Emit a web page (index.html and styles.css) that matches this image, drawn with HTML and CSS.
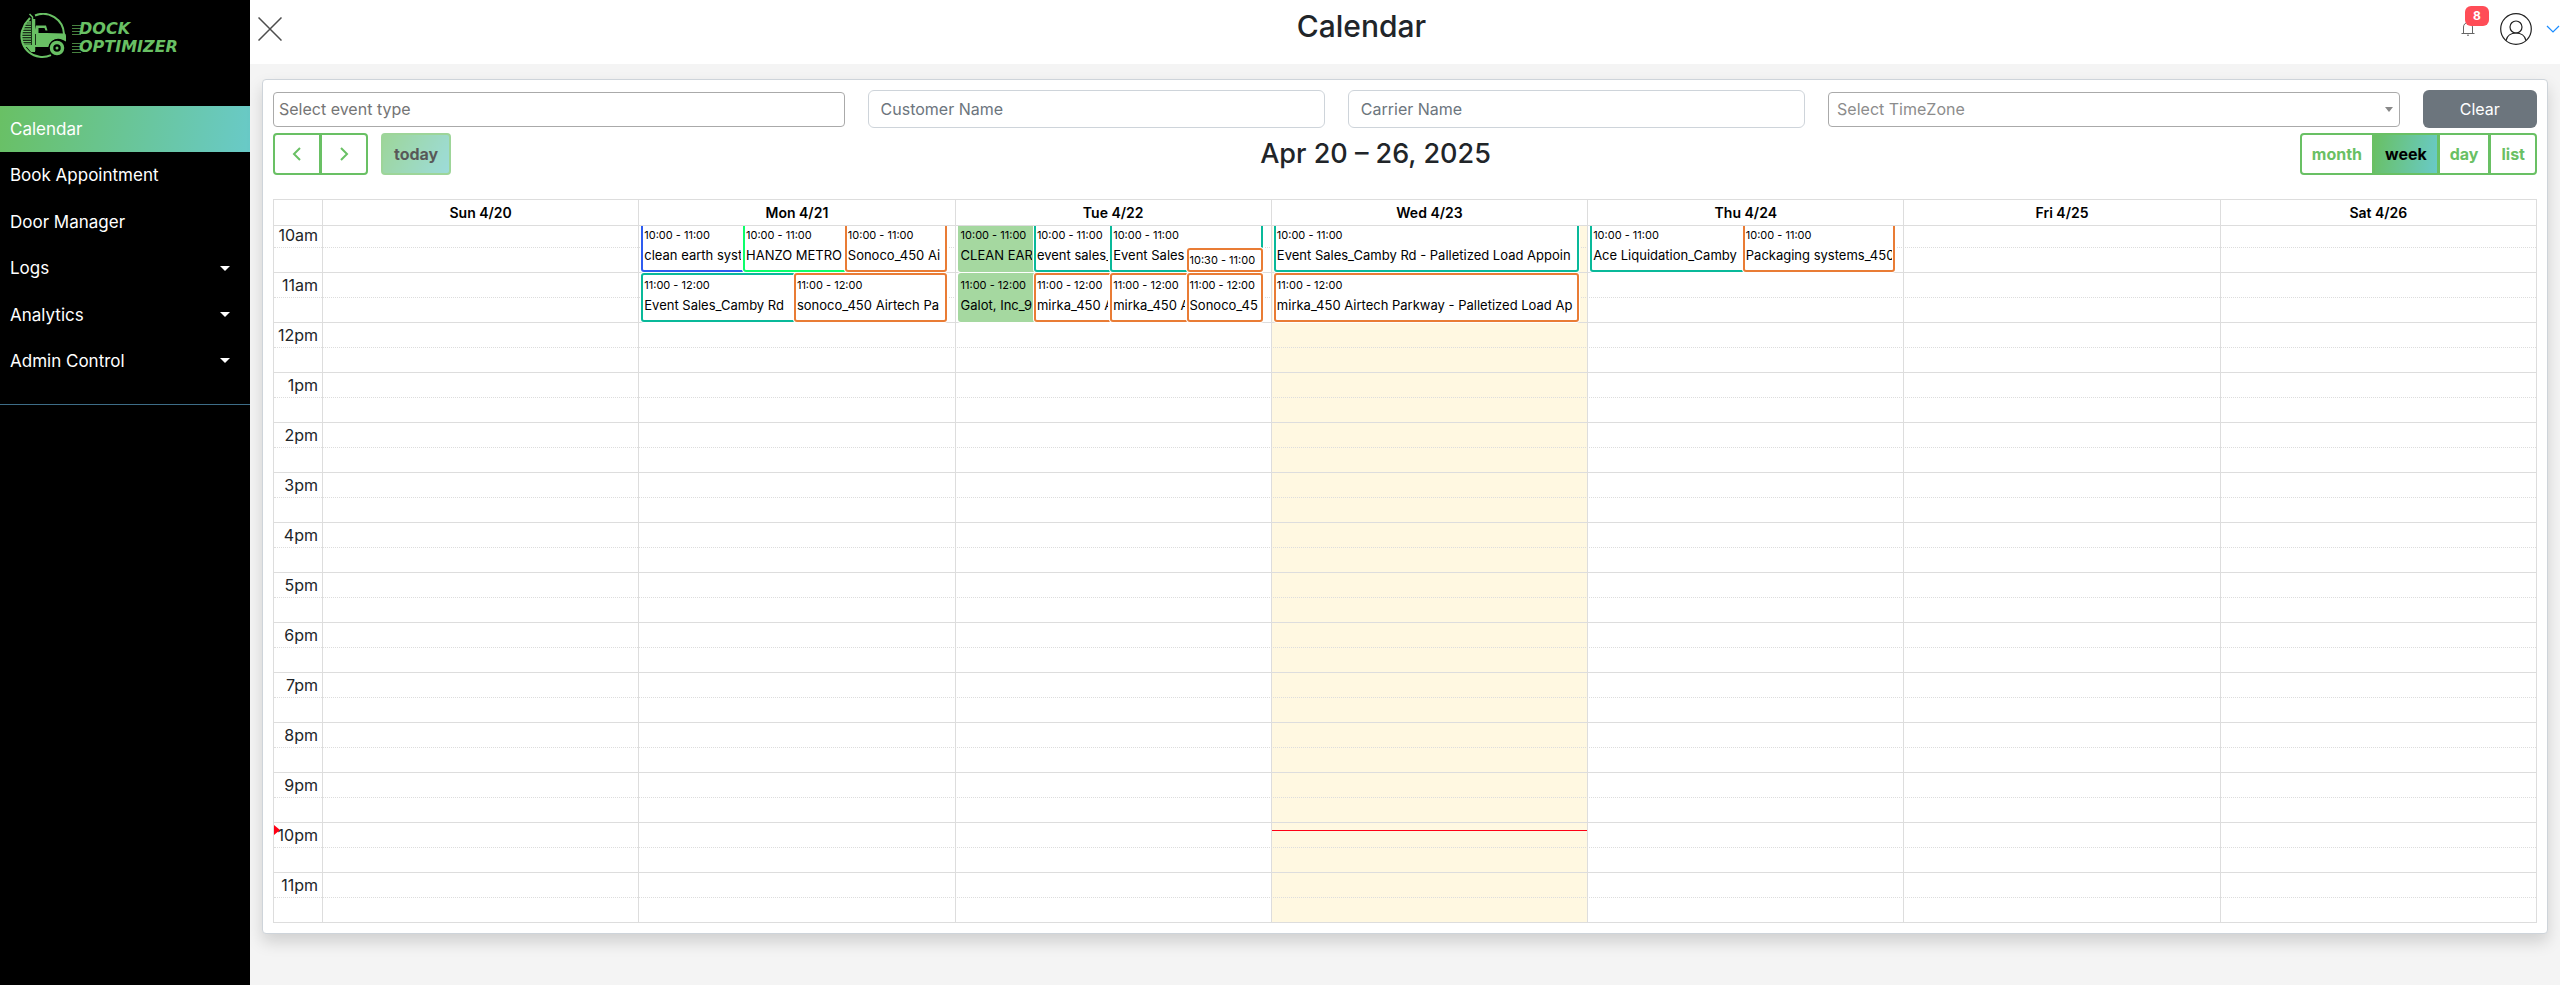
FILE: index.html
```html
<!DOCTYPE html>
<html lang="en">
<head>
<meta charset="utf-8">
<title>Dock Optimizer - Calendar</title>
<link rel="stylesheet" href="styles.css">
</head>
<body>
<div class="app">
  <aside class="sidebar">
    <a class="brand" href="#" aria-label="Dock Optimizer">
      <svg class="brand-mark" viewBox="0 0 46 46" aria-hidden="true">
        <g fill="none" stroke="#69c064">
          <path stroke-width="2" d="M15 2.500A21 21 0 0 1 44 21M31 42.200A21 21 0 0 1 2 18L5 11 10 5"/>
          <path stroke-width="1.300" d="M8 9h3M6 11h5M4 13.500h7M3 16h8M2 18.500h9M2 21h9M2 23.500h9M2 26h9M2 28.500h9M3 31h8"/>
          <path stroke-width="1.500" d="M9.500 1l3 3v35"/>
          <path stroke-width="2.500" d="M14 6v32"/>
          <path stroke-width="1.200" d="M17.500 22.500h7M17.500 24.500h7M17.500 26.500h7M17.500 28.500h7M17.500 30.500h7"/>
        </g>
        <path fill="#69c064" d="M16 12.500h10l1.500 5h-2l-1-2.500h-6v5h8l18 .5q1.500 0 1.500 3v5l-3-1.500q-6-3-11 1-3 2.500-3.500 6H3v-2h13v-11h-2z"/>
        <path fill="#69c064" d="M5 32h10v7h-4z"/>
        <circle cx="37" cy="35" r="8.500" fill="#000"/>
        <circle cx="37" cy="35" r="5.500" fill="none" stroke="#69c064" stroke-width="3.500"/>
        <circle cx="37" cy="35" r="1.500" fill="#69c064"/>
      </svg>
      <span class="brand-name"><span>DOCK</span><span>OPTIMIZER</span></span>
    </a>
    <nav class="menu">
      <a class="menu-item active" href="#">Calendar</a>
      <a class="menu-item" href="#">Book Appointment</a>
      <a class="menu-item" href="#">Door Manager</a>
      <a class="menu-item has-sub" href="#">Logs</a>
      <a class="menu-item has-sub" href="#">Analytics</a>
      <a class="menu-item has-sub" href="#">Admin Control</a>
    </nav>
    <hr class="menu-rule">
  </aside>

  <div class="main">
    <header class="topbar">
      <button class="icon-btn" type="button" aria-label="Close menu">
        <svg width="24" height="24" viewBox="0 0 24 24" fill="none" stroke="#4d4d4d" stroke-width="1.500"><path d="M0.500 0.500l23 23M23.500 0.500l-23 23"/></svg>
      </button>
      <h1 class="page-title">Calendar</h1>
      <div class="account">
        <button class="icon-btn bell" type="button" aria-label="Notifications">
          <svg width="14" height="14" viewBox="0 0 14 14" fill="none" stroke="#666"><path d="M2.500 11.500V5a4.500 4.500 0 0 1 9 0v6.500M0.500 11.500h13M6 13.200h2"/></svg>
          <span class="badge">8</span>
        </button>
        <button class="icon-btn" type="button" aria-label="Account">
          <svg width="32" height="32" viewBox="0 0 32 32" fill="none" stroke="#222" stroke-width="1.200"><circle cx="16" cy="16" r="15.300"/><circle cx="16" cy="14" r="6"/><path d="M6 27.500c1-4.500 5-7.500 10-7.500s9 3 10 7.500"/></svg>
        </button>
        <button class="icon-btn more" type="button" aria-label="More">
          <svg width="14" height="8" viewBox="0 0 14 8" fill="none" stroke="#1a8cff" stroke-width="1.200"><path d="M1 1l6 6 6-6"/></svg>
        </button>
      </div>
    </header>

    <main class="card">
      <form class="filters">
        <input class="field plain" type="text" placeholder="Select event type" aria-label="Event type">
        <input class="field" type="text" placeholder="Customer Name" aria-label="Customer Name">
        <input class="field" type="text" placeholder="Carrier Name" aria-label="Carrier Name">
        <div class="select">
          <select class="field zone" aria-label="Time zone"><option>Select TimeZone</option></select>
        </div>
        <button class="clear" type="button">Clear</button>
      </form>

      <div class="toolbar">
        <div class="toolbar-start">
          <div class="btn-group">
            <button class="btn arrow" type="button" aria-label="Previous week"><svg width="10" height="16" viewBox="0 0 10 16" fill="none" stroke="#69c064" stroke-width="2"><path d="M8 2L2 8l6 6"/></svg></button>
            <button class="btn arrow" type="button" aria-label="Next week"><svg width="10" height="16" viewBox="0 0 10 16" fill="none" stroke="#69c064" stroke-width="2"><path d="M2 2l6 6-6 6"/></svg></button>
          </div>
          <button class="btn today" type="button" disabled>today</button>
        </div>
        <h2 class="range">Apr 20 – 26, 2025</h2>
        <div class="btn-group">
          <button class="btn" type="button">month</button>
          <button class="btn on" type="button">week</button>
          <button class="btn" type="button">day</button>
          <button class="btn" type="button">list</button>
        </div>
      </div>

      <section class="week">
        <div class="week-head">
          <div></div><div>Sun 4/20</div><div>Mon 4/21</div><div>Tue 4/22</div><div>Wed 4/23</div><div>Thu 4/24</div><div>Fri 4/25</div><div>Sat 4/26</div>
        </div>
        <div class="week-body">
          <div class="week-scroll">
            <div class="columns back"><div></div><div></div><div></div><div></div><div class="current"></div><div></div><div></div><div></div></div>
            <table class="slots">
              <tbody>
                <tr><th scope="row">10am</th><td></td></tr><tr class="half"><th></th><td></td></tr>
                <tr><th scope="row">11am</th><td></td></tr><tr class="half"><th></th><td></td></tr>
                <tr><th scope="row">12pm</th><td></td></tr><tr class="half"><th></th><td></td></tr>
                <tr><th scope="row">1pm</th><td></td></tr><tr class="half"><th></th><td></td></tr>
                <tr><th scope="row">2pm</th><td></td></tr><tr class="half"><th></th><td></td></tr>
                <tr><th scope="row">3pm</th><td></td></tr><tr class="half"><th></th><td></td></tr>
                <tr><th scope="row">4pm</th><td></td></tr><tr class="half"><th></th><td></td></tr>
                <tr><th scope="row">5pm</th><td></td></tr><tr class="half"><th></th><td></td></tr>
                <tr><th scope="row">6pm</th><td></td></tr><tr class="half"><th></th><td></td></tr>
                <tr><th scope="row">7pm</th><td></td></tr><tr class="half"><th></th><td></td></tr>
                <tr><th scope="row">8pm</th><td></td></tr><tr class="half"><th></th><td></td></tr>
                <tr><th scope="row">9pm</th><td></td></tr><tr class="half"><th></th><td></td></tr>
                <tr><th scope="row">10pm</th><td></td></tr><tr class="half"><th></th><td></td></tr>
                <tr><th scope="row">11pm</th><td></td></tr><tr class="half"><th></th><td></td></tr>
              </tbody>
            </table>
            <div class="columns front">
              <div><i class="now-arrow"></i></div>
              <div></div>
              <div><div class="lane">
                <a class="event blue" style="--at:0;--of:3"><time>10:00 - 11:00</time><span>clean earth syst</span></a>
                <a class="event lime" style="--at:1;--of:3"><time>10:00 - 11:00</time><span>HANZO METRO</span></a>
                <a class="event orange last" style="--at:2;--of:3"><time>10:00 - 11:00</time><span>Sonoco_450 Ai</span></a>
                <a class="event teal eleven" style="--at:0;--of:2"><time>11:00 - 12:00</time><span>Event Sales_Camby Rd</span></a>
                <a class="event orange eleven last" style="--at:1;--of:2"><time>11:00 - 12:00</time><span>sonoco_450 Airtech Pa</span></a>
              </div></div>
              <div><div class="lane">
                <a class="event green" style="--at:0;--of:4"><time>10:00 - 11:00</time><span>CLEAN EAR</span></a>
                <a class="event teal" style="--at:1;--of:4"><time>10:00 - 11:00</time><span>event sales_</span></a>
                <a class="event teal wide" style="--at:2;--of:4"><time>10:00 - 11:00</time><span>Event Sales</span></a>
                <a class="event orange short last" style="--at:3;--of:4"><time>10:30 - 11:00</time></a>
                <a class="event green eleven" style="--at:0;--of:4"><time>11:00 - 12:00</time><span>Galot, Inc_9</span></a>
                <a class="event orange eleven" style="--at:1;--of:4"><time>11:00 - 12:00</time><span>mirka_450 A</span></a>
                <a class="event orange eleven" style="--at:2;--of:4"><time>11:00 - 12:00</time><span>mirka_450 A</span></a>
                <a class="event orange eleven last" style="--at:3;--of:4"><time>11:00 - 12:00</time><span>Sonoco_45</span></a>
              </div></div>
              <div><i class="now-line"></i><div class="lane">
                <a class="event teal last" style="--at:0;--of:1"><time>10:00 - 11:00</time><span>Event Sales_Camby Rd - Palletized Load Appoin</span></a>
                <a class="event orange eleven last" style="--at:0;--of:1"><time>11:00 - 12:00</time><span>mirka_450 Airtech Parkway - Palletized Load Ap</span></a>
              </div></div>
              <div><div class="lane">
                <a class="event teal" style="--at:0;--of:2"><time>10:00 - 11:00</time><span>Ace Liquidation_Camby</span></a>
                <a class="event orange last" style="--at:1;--of:2"><time>10:00 - 11:00</time><span>Packaging systems_450</span></a>
              </div></div>
              <div></div>
              <div></div>
            </div>
          </div>
        </div>
      </section>
    </main>
  </div>
</div>
</body>
</html>
```
FILE: styles.css
```css
:root {
  --green: #69c064;
  --cyan: #69cac8;
  --line: #ddd;
  --week-columns: 48px repeat(7, minmax(0, 1fr));
}

* { box-sizing: border-box; }

body {
  margin: 0;
  background: #f4f4f4;
  color: #212529;
  font-family: Inter, "Liberation Sans", sans-serif;
  font-size: 16px;
  line-height: 24px;
}

button, input, select { font: inherit; }

.app { display: flex; min-height: 100vh; }

/* Sidebar */
.sidebar { flex: 0 0 250px; background: #000; }

.brand {
  display: flex;
  align-items: center;
  gap: 6px;
  padding: 13px 20px 0;
  margin-bottom: 47px;
  text-decoration: none;
}
.brand-mark { flex: none; width: 46px; height: 46px; }
.brand-name {
  display: flex;
  flex-direction: column;
  padding-top: 3px;
  color: var(--green);
  font: italic 700 16px/18px "DejaVu Sans", sans-serif;
}
.brand-name span {
  padding-left: 7px;
  background: repeating-linear-gradient(#47823f 0 1px, transparent 1px 3px) 0 5px / 9px 10px no-repeat;
}

.menu {
  display: flex;
  flex-direction: column;
  justify-content: space-between;
  min-height: 278px;
}
.menu-item {
  display: flex;
  align-items: center;
  justify-content: space-between;
  height: 46px;
  padding: 0 20px 0 10px;
  color: #fff;
  font-size: 17px;
  text-decoration: none;
}
.menu-item.active { background: linear-gradient(100deg, var(--green), var(--cyan)); }
.has-sub::after {
  content: "";
  border: 5px solid transparent;
  border-top-color: #fff;
  border-bottom: 0;
}
.menu-rule { margin: 20px 0 0; border: 0; border-top: 1px solid #3d6d87; }

/* Top bar */
.main { flex: 1; min-width: 0; }
.topbar {
  display: flex;
  align-items: center;
  justify-content: space-between;
  height: 64px;
  padding: 0 0 6px 8px;
  background: #fff;
}
.page-title { margin: 0 0 6px; font-size: 30px; font-weight: 500; line-height: 36px; }
.icon-btn { position: relative; display: flex; padding: 0; border: 0; background: none; }
.account { display: flex; align-items: center; padding-left: 20px; }
.bell { margin-right: 25px; }
.badge {
  position: absolute;
  left: 4px;
  bottom: 10px;
  width: 24px;
  border-radius: 6px;
  background: #ff4d57;
  color: #fff;
  font-size: 12px;
  font-weight: 700;
  line-height: 20px;
  text-align: center;
}
.more { margin-left: 14px; }

/* Card and filters */
.card {
  margin: 15px 12px 40px;
  padding: 10px;
  border: 1px solid #ced4da;
  border-radius: 4px;
  background: #fff;
  box-shadow: 0 8px 16px rgba(0, 0, 0, .15);
}
.filters {
  display: grid;
  grid-template-columns: 5fr 4fr 4fr 5fr 1fr;
  align-items: center;
  gap: 23px;
}
.field {
  display: block;
  width: 100%;
  min-width: 0;
  height: 38px;
  padding: 0 12px;
  border: 1px solid #ced4da;
  border-radius: 6px;
  background: #fff;
  color: #6c757d;
}
.field::placeholder { color: #6c757d; opacity: 1; }
.plain, .zone { height: 35px; border-color: #aaa; border-radius: 4px; }
.plain { padding: 0 5px; }
.plain::placeholder { color: #757575; }
.zone { padding: 0 8px; appearance: none; color: #8c8c8c; }
.select { position: relative; }
.select::after {
  content: "";
  position: absolute;
  top: 15px;
  right: 7px;
  border: 4px solid transparent;
  border-top: 5px solid #888;
  border-bottom: 0;
  pointer-events: none;
}
.clear { height: 38px; border: 0; border-radius: 6px; background: #6c757d; color: #fff; }

/* Calendar toolbar */
.toolbar {
  display: flex;
  align-items: center;
  justify-content: space-between;
  margin: 5px 0 24px;
}
.toolbar-start { display: flex; gap: 13px; }
.range { margin: 0; font-size: 27px; font-weight: 500; line-height: 36px; }
.btn-group { display: flex; }
.btn {
  height: 42px;
  padding: 0 10px;
  border: 2px solid var(--green);
  background: #fff;
  color: var(--green);
  font-weight: 700;
}
.btn-group .btn + .btn { margin-left: -1px; }
.btn-group .btn:first-child { border-radius: 4px 0 0 4px; }
.btn-group .btn:last-child { border-radius: 0 4px 4px 0; }
.btn.arrow { display: flex; align-items: center; justify-content: center; width: 48px; padding: 0; }
.btn.on { background: linear-gradient(100deg, var(--green), var(--cyan)); color: #000; }
.btn.today {
  padding: 0 11px;
  border-radius: 4px;
  background: linear-gradient(120deg, var(--green), var(--cyan));
  color: #000;
  opacity: .65;
}

/* Week grid */
.week { border: 1px solid var(--line); }
.week-head { display: grid; grid-template-columns: var(--week-columns); border-bottom: 1px solid var(--line); }
.week-head > div {
  height: 25px;
  color: #000;
  font-size: 14px;
  font-weight: 600;
  line-height: 26px;
  text-align: center;
}
.week-head > div + div, .back > div + div { border-left: 1px solid var(--line); }
.week-body { overflow: hidden; }
.week-scroll { position: relative; margin-top: -4px; }
.columns { position: absolute; inset: 0; display: grid; grid-template-columns: var(--week-columns); }
.front > div { position: relative; }
.current { background: #fff8e1; }

.slots { position: relative; width: 100%; table-layout: fixed; border-collapse: separate; border-spacing: 0; }
.slots th, .slots td {
  height: 25px;
  padding: 0;
  border-top: 1px solid var(--line);
  line-height: 24px;
  vertical-align: top;
}
.slots .half th, .slots .half td { border-top-style: dotted; }
.slots th { width: 48px; padding-right: 4px; font-weight: 400; text-align: right; }

/* Appointments */
.lane { position: absolute; inset: 0 8px 0 3px; }
.event {
  position: absolute;
  top: 1px;
  left: calc(var(--at) * 100% / var(--of));
  width: calc(100% / var(--of) + 6px);
  height: 49px;
  padding: 0 6px 0 1px;
  overflow: hidden;
  border: 2px solid;
  border-radius: 3px;
  background: #fff;
  box-shadow: 0 0 0 1px #fff;
  white-space: nowrap;
}
.event.last { width: calc(100% / var(--of)); padding-right: 1px; }
.event.wide { width: 50%; }
.event.eleven { top: 51px; }
.event.short { top: 26px; height: 24px; }
.event time, .event span { display: block; color: #000; }
.event time { font-size: 11px; line-height: 20px; }
.event span { overflow: hidden; font-size: 13px; line-height: 20px; }
.blue { border-color: #2e5cf0; }
.lime { border-color: #0cff6a; }
.orange { border-color: #e97c35; }
.teal { border-color: #09b99a; }
.green { border-color: #a5d8a0; background: #a5d8a0; }

.now-line { position: absolute; inset: 608px 0 auto 1px; border-top: 1px solid #ff0015; }
.now-arrow {
  position: absolute;
  top: 603px;
  left: 0;
  border: 5px solid transparent;
  border-left: 6px solid #ff0015;
  border-right: 0;
}
```
